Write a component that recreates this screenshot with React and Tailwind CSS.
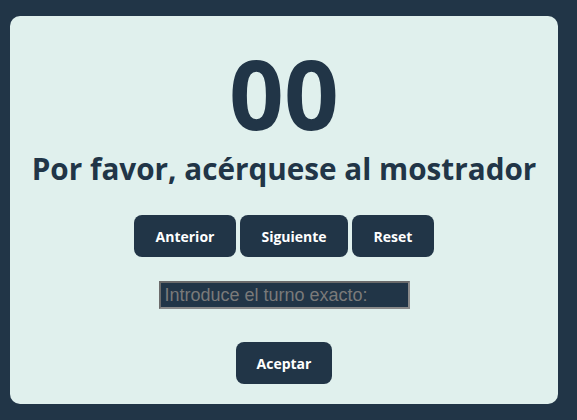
import React, { useState } from "react";

const App = () => {
  const [turno, setTurno] = useState(0);
  const [valor, setValor] = useState("");

  const fmt = (n) => String(n).padStart(2, "0");

  return (
    <div className="min-h-screen w-full bg-[#213547] p-[10px] pt-[16px] pr-[19px] pb-[16px] font-['Open_Sans',sans-serif]">
      <div className="flex h-[388px] flex-col items-center rounded-[10px] bg-[#e0f0ed] pt-[29px] text-[#213547]">
        <div className="text-[96px] font-bold leading-none">{fmt(turno)}</div>
        <h2 className="mt-[8px] text-[29.7px] font-bold leading-[40px]">Por favor, acérquese al mostrador</h2>
        <div className="mt-[26px] flex gap-[4px]">
          <button
            className="h-[42px] rounded-[8px] bg-[#213547] px-[21.5px] text-[14px] font-bold text-white"
            onClick={() => setTurno(Math.max(0, turno - 1))}
          >
            Anterior
          </button>
          <button
            className="h-[42px] rounded-[8px] bg-[#213547] px-[21.5px] text-[14px] font-bold text-white"
            onClick={() => setTurno(turno + 1)}
          >
            Siguiente
          </button>
          <button
            className="h-[42px] rounded-[8px] bg-[#213547] px-[21.5px] text-[14px] font-bold text-white"
            onClick={() => setTurno(0)}
          >
            Reset
          </button>
        </div>
        <input
          className="mt-[24px] h-[28px] w-[251px] border-2 border-t-[#6b6b6b] border-l-[#6b6b6b] border-r-[#8a8a8a] border-b-[#8a8a8a] bg-[#213547] px-[4px] font-['Liberation_Sans',sans-serif] text-[18px] text-white placeholder:text-[#7a7a7a] outline-none"
          placeholder="Introduce el turno exacto:"
          value={valor}
          onChange={(e) => setValor(e.target.value)}
        />
        <button
          className="mt-[33px] h-[42px] w-[96px] rounded-[8px] bg-[#213547] text-[14px] font-bold text-white"
          onClick={() => {
            const n = parseInt(valor, 10);
            if (!isNaN(n)) setTurno(n);
            setValor("");
          }}
        >
          Aceptar
        </button>
      </div>
    </div>
  );
};

export default App;
